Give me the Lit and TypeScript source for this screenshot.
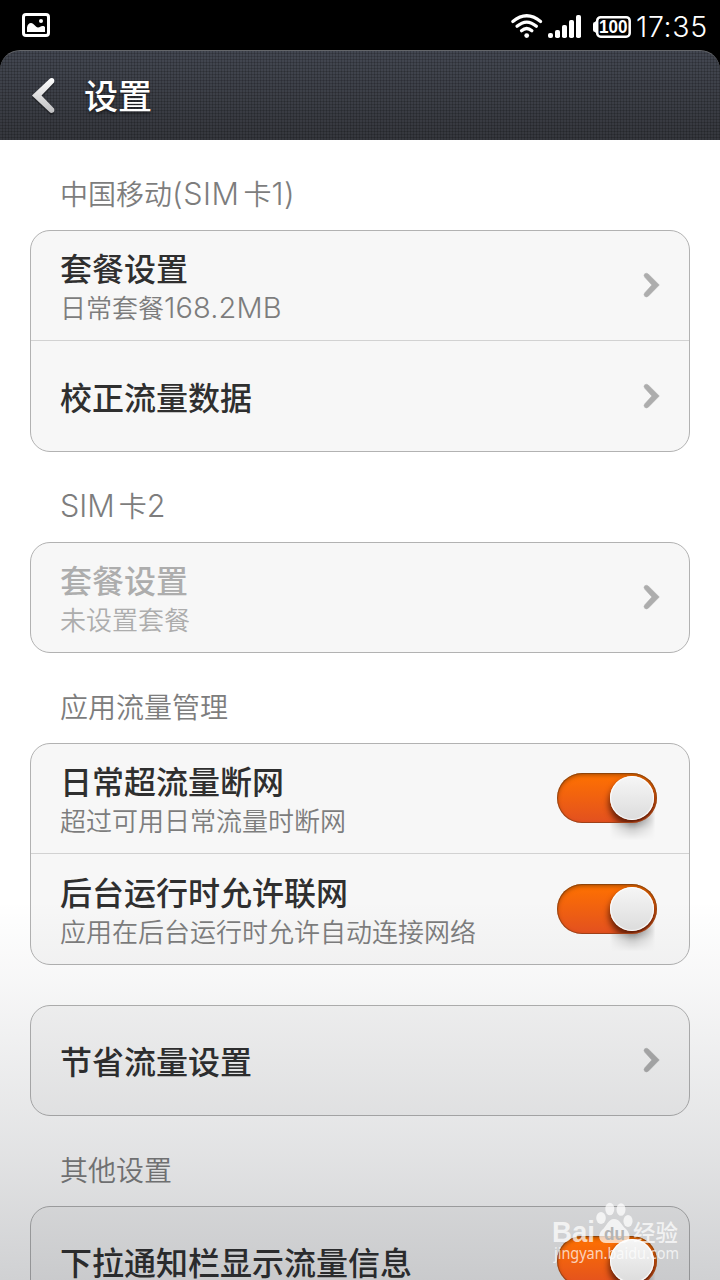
import { LitElement, html, css, nothing } from "lit";
import { customElement, property } from "lit/decorators.js";

@customElement("status-bar")
class StatusBar extends LitElement {
  static styles = css`
    :host { display: flex; height: 50px; background: #000; color: #fff; align-items: flex-start; }
    svg { display: block; }
    .left { flex: 1; }
    .clock { font: 300 28.5px/32px Inter, "Liberation Sans", sans-serif; padding-top: 11px; width: 84px; letter-spacing: 0.7px; white-space: nowrap; }
    .num { font: 700 17.5px "Liberation Sans", sans-serif; }
  `;
  render() {
    return html`
      <svg class="left" height="50" viewBox="0 0 300 50" preserveAspectRatio="xMinYMin meet">
        <rect x="23.500" y="14.500" width="25" height="21" rx="2.500" fill="none" stroke="#fff" stroke-width="3"/>
        <path d="M27 32V27.500C27.500 24.500 29 23 31 23C34 23 35.500 27.500 38 27.500C40 27.500 40.500 26 42.500 26C44 26 44.500 26.500 45 27V32Z" fill="#fff"/>
        <circle cx="41" cy="21" r="2" fill="#fff"/>
      </svg>
      <svg width="126" height="50" viewBox="510 0 126 50">
        <g fill="none" stroke="#fff" stroke-width="3.200" stroke-linecap="round">
          <path d="M512.800 21.500Q526.700 10 540.600 21.500"/>
          <path d="M517 26.300Q526.700 17.800 536.400 26.300"/>
          <path d="M521.500 30.800Q526.700 26.200 531.900 30.800"/>
        </g>
        <circle cx="526.700" cy="35.600" r="2.400" fill="#fff"/>
        <g fill="#fff">
          <rect x="548" y="33" width="5" height="5" rx="2"/>
          <rect x="555" y="30" width="5" height="8" rx="1.800"/>
          <rect x="562" y="25" width="5" height="13" rx="1.800"/>
          <rect x="569" y="20" width="5" height="18" rx="1.800"/>
          <rect x="576" y="15" width="5" height="23" rx="1.800"/>
        </g>
        <rect x="597.200" y="17.200" width="32.500" height="19.500" rx="3.500" fill="none" stroke="#fff" stroke-width="2.500"/>
        <path d="M597.500 19L595 22Q593 22 593 24V30Q593 32 595 32L597.500 35Z" fill="#fff"/>
        <text class="num" x="599" y="33.300" textLength="28.500" lengthAdjust="spacingAndGlyphs" fill="#fff">100</text>
      </svg>
      <div class="clock">17:35</div>`;
  }
}

@customElement("title-bar")
class TitleBar extends LitElement {
  static styles = css`
    :host { display: block; background: #000; height: 90px; }
    .bar {
      height: 90px; box-sizing: border-box; display: flex; align-items: center; padding-left: 30px; gap: 26px;
      border-top: 1px solid #64666a; border-radius: 20px 20px 0 0; color: #fff;
      background:
        repeating-linear-gradient(90deg, transparent 0 2px, rgba(0,0,0,.17) 2px 3px),
        repeating-linear-gradient(180deg, transparent 0 2px, rgba(0,0,0,.17) 2px 3px),
        linear-gradient(#434751, #35373d);
    }
    svg { display: block; }
    .title { font: 500 34px/46px "Noto Sans CJK SC", sans-serif; padding-bottom: 2px; text-shadow: 0 2px 3px rgba(0,0,0,.5); }
  `;
  render() {
    return html`<div class="bar">
      <svg width="28" height="46" viewBox="30 73 28 46">
        <defs><linearGradient id="g" x1="0" y1="0" x2="0" y2="1"><stop offset="0" stop-color="#fff"/><stop offset="1" stop-color="#bfbfc1"/></linearGradient></defs>
        <path d="M49.500 79Q51 77.500 53 78.300Q55 79.500 54 82.500L41.500 95.500L54 108.500Q55 111.500 53 112.600Q51 113.500 49.500 112L32 95.500Z" fill="#000" opacity=".3" transform="translate(0 2)"/>
        <path d="M49.500 79Q51 77.500 53 78.300Q55 79.500 54 82.500L41.500 95.500L54 108.500Q55 111.500 53 112.600Q51 113.500 49.500 112L32 95.500Z" fill="url(#g)"/>
      </svg>
      <div class="title">设置</div>
    </div>`;
  }
}

@customElement("toggle-switch")
class ToggleSwitch extends LitElement {
  static styles = css`
    :host { display: block; position: relative; z-index: 2; }
    .track {
      width: 100px; height: 50px; border-radius: 25px; box-sizing: border-box; padding: 3px 3px 3px 53px;
      background: linear-gradient(#ff7200, #e25020);
      box-shadow: inset 0 0 0 1px rgba(90,50,20,.45), inset 0 2px 4px rgba(90,40,0,.55);
      position: relative;
    }
    .drop { position: absolute; left: 53px; top: 25px; width: 45px; height: 42px; background: linear-gradient(rgba(0,0,0,.5) 52%, rgba(0,0,0,.14) 75%, rgba(0,0,0,0)); filter: blur(1.5px);
      -webkit-mask: linear-gradient(90deg, rgba(0,0,0,.06), #000 45%, #000 55%, rgba(0,0,0,.06)); }
    .shade { position: absolute; inset: 1px; border-radius: 24px; overflow: hidden; }
    .shade i { position: absolute; left: 51px; top: 6px; width: 46px; height: 46px; border-radius: 50%; background: rgba(60,15,0,.75); filter: blur(3px); }
    .knob { position: relative; width: 44px; height: 44px; border-radius: 50%; background: linear-gradient(#f6f6f6, #dcdcdc); box-shadow: inset 0 0 1px 1px #fff; }
  `;
  render() {
    return html`<div class="drop"></div><div class="track"><div class="shade"><i></i></div><div class="knob"></div></div>`;
  }
}

@customElement("setting-row")
class SettingRow extends LitElement {
  @property() heading = "";
  @property() note = "";
  @property() amount = "";
  @property() kind = "link";
  @property({ type: Boolean }) dim = false;
  static styles = css`
    :host { display: flex; align-items: center; justify-content: space-between; box-sizing: border-box; height: 109px; padding: 0 32px 1px 29px; }
    :host(.tail) { height: 110px; padding-bottom: 0; }
    :host(.div) { height: 110px; border-bottom: 1px solid #d2d2d2; }
    svg { display: block; }
    .h { font: 500 32px/42px "Noto Sans CJK SC", sans-serif; color: #2f2f2f; white-space: nowrap; }
    .n { font: 350 26px/34px "Noto Sans CJK SC", sans-serif; color: #7d7d7d; white-space: nowrap; padding-top: 2px; }
    .single { padding-bottom: 1px; }
    .dim { color: #adadad; }
    .num { font: 300 29px/34px Inter, "Liberation Sans", sans-serif; letter-spacing: 0.1px; }
    .arrow { margin-right: -4px; }
  `;
  render() {
    const d = this.dim ? "dim" : "";
    return html`
      <div class=${this.note ? "" : "single"}>
        <div class="h ${d}">${this.heading}</div>
        ${this.note ? html`<div class="n ${d}">${this.note}${this.amount ? html`<span class="num">${this.amount}</span>` : nothing}</div>` : nothing}
      </div>
      ${this.kind === "toggle"
        ? html`<toggle-switch></toggle-switch>`
        : html`<svg class="arrow" width="18" height="26" viewBox="643 272 18 26"><path d="M648.300 274L659.300 285L648.300 296.200Q646.500 297.700 644.700 296.300Q643.200 294.300 644.800 292.800L651.800 285L644.800 277.300Q643.200 275.500 644.700 273.800Q646.500 272.500 648.300 274Z" fill="#adadad" stroke="#adadad" stroke-width=".5"/></svg>`}`;
  }
}

@customElement("app-root")
class AppRoot extends LitElement {
  static styles = css`
    :host { display: block; position: relative; width: 720px; height: 1280px; overflow: hidden; background: #fff; }
    .label { height: 90px; box-sizing: border-box; padding: 33px 0 0 60px; font: 350 28px/40px "Noto Sans CJK SC", sans-serif; color: #7d7d7d; white-space: nowrap; }
    .lat { font: 300 30.5px/40px Inter, "Liberation Sans", sans-serif; }
    .wide { letter-spacing: 0.5px; }
    .sp { letter-spacing: -4.5px; }
    .card { margin: 0 30px; border: 1px solid #b2b2b2; border-radius: 20px; background: #f7f7f7; }
    .gap { margin-top: 40px; }
    .fade { position: absolute; left: 0; right: 0; bottom: 0; height: 380px; background: linear-gradient(rgba(20,25,35,0), rgba(20,25,35,.035) 22%, rgba(20,25,35,.12) 66%, rgba(20,25,35,.2)); }
    .mark { position: absolute; left: 540px; top: 1195px; z-index: 3; }
    .b { font: 700 29px "Liberation Sans", sans-serif; }
    .c { font: 500 23px "Noto Sans CJK SC", sans-serif; }
    .u { font: 400 16px "Noto Sans", sans-serif; }
    .du { font: 700 19px "Liberation Sans", sans-serif; }
  `;
  render() {
    return html`
      <status-bar></status-bar>
      <title-bar></title-bar>
      <div class="label">中国移动<span class="lat wide">(SIM<span class="sp"> </span></span>卡<span class="lat wide">1)</span></div>
      <div class="card">
        <setting-row class="div" heading="套餐设置" note="日常套餐" amount="168.2MB"></setting-row>
        <setting-row class="tail" heading="校正流量数据"></setting-row>
      </div>
      <div class="label"><span class="lat">SIM<span class="sp"> </span></span>卡<span class="lat">2</span></div>
      <div class="card"><setting-row heading="套餐设置" note="未设置套餐" dim></setting-row></div>
      <div class="label">应用流量管理</div>
      <div class="card">
        <setting-row class="div" heading="日常超流量断网" note="超过可用日常流量时断网" kind="toggle"></setting-row>
        <setting-row class="tail" heading="后台运行时允许联网" note="应用在后台运行时允许自动连接网络" kind="toggle"></setting-row>
      </div>
      <div class="card gap"><setting-row heading="节省流量设置"></setting-row></div>
      <div class="label">其他设置</div>
      <div class="card"><setting-row class="div" heading="下拉通知栏显示流量信息" kind="toggle"></setting-row></div>
      <div class="fade"></div>
      <svg class="mark" width="150" height="75" viewBox="540 1195 150 75" fill="#fff" fill-opacity=".72">
        <text class="b" x="552" y="1242" textLength="43" lengthAdjust="spacingAndGlyphs">Bai</text>
        <ellipse cx="601" cy="1218" rx="4.800" ry="6"/><ellipse cx="609.800" cy="1209" rx="4.500" ry="6.300"/>
        <ellipse cx="621" cy="1209.500" rx="4.500" ry="6.300"/><ellipse cx="628" cy="1221" rx="4.600" ry="6"/>
        <path d="M614 1219C608 1219 607 1226 602 1230C597 1235 599 1243 606 1243H624C631 1242 631 1234 626 1229C621 1225 620 1219 614 1219Z"/>
        <text class="du" x="604" y="1240" textLength="21" lengthAdjust="spacingAndGlyphs" fill="#b4b4b4" fill-opacity="1">du</text>
        <text class="c" x="633" y="1240.500" textLength="45" lengthAdjust="spacingAndGlyphs">经验</text>
        <text class="u" x="554" y="1259" textLength="125" lengthAdjust="spacingAndGlyphs">jingyan.baidu.com</text>
      </svg>`;
  }
}
